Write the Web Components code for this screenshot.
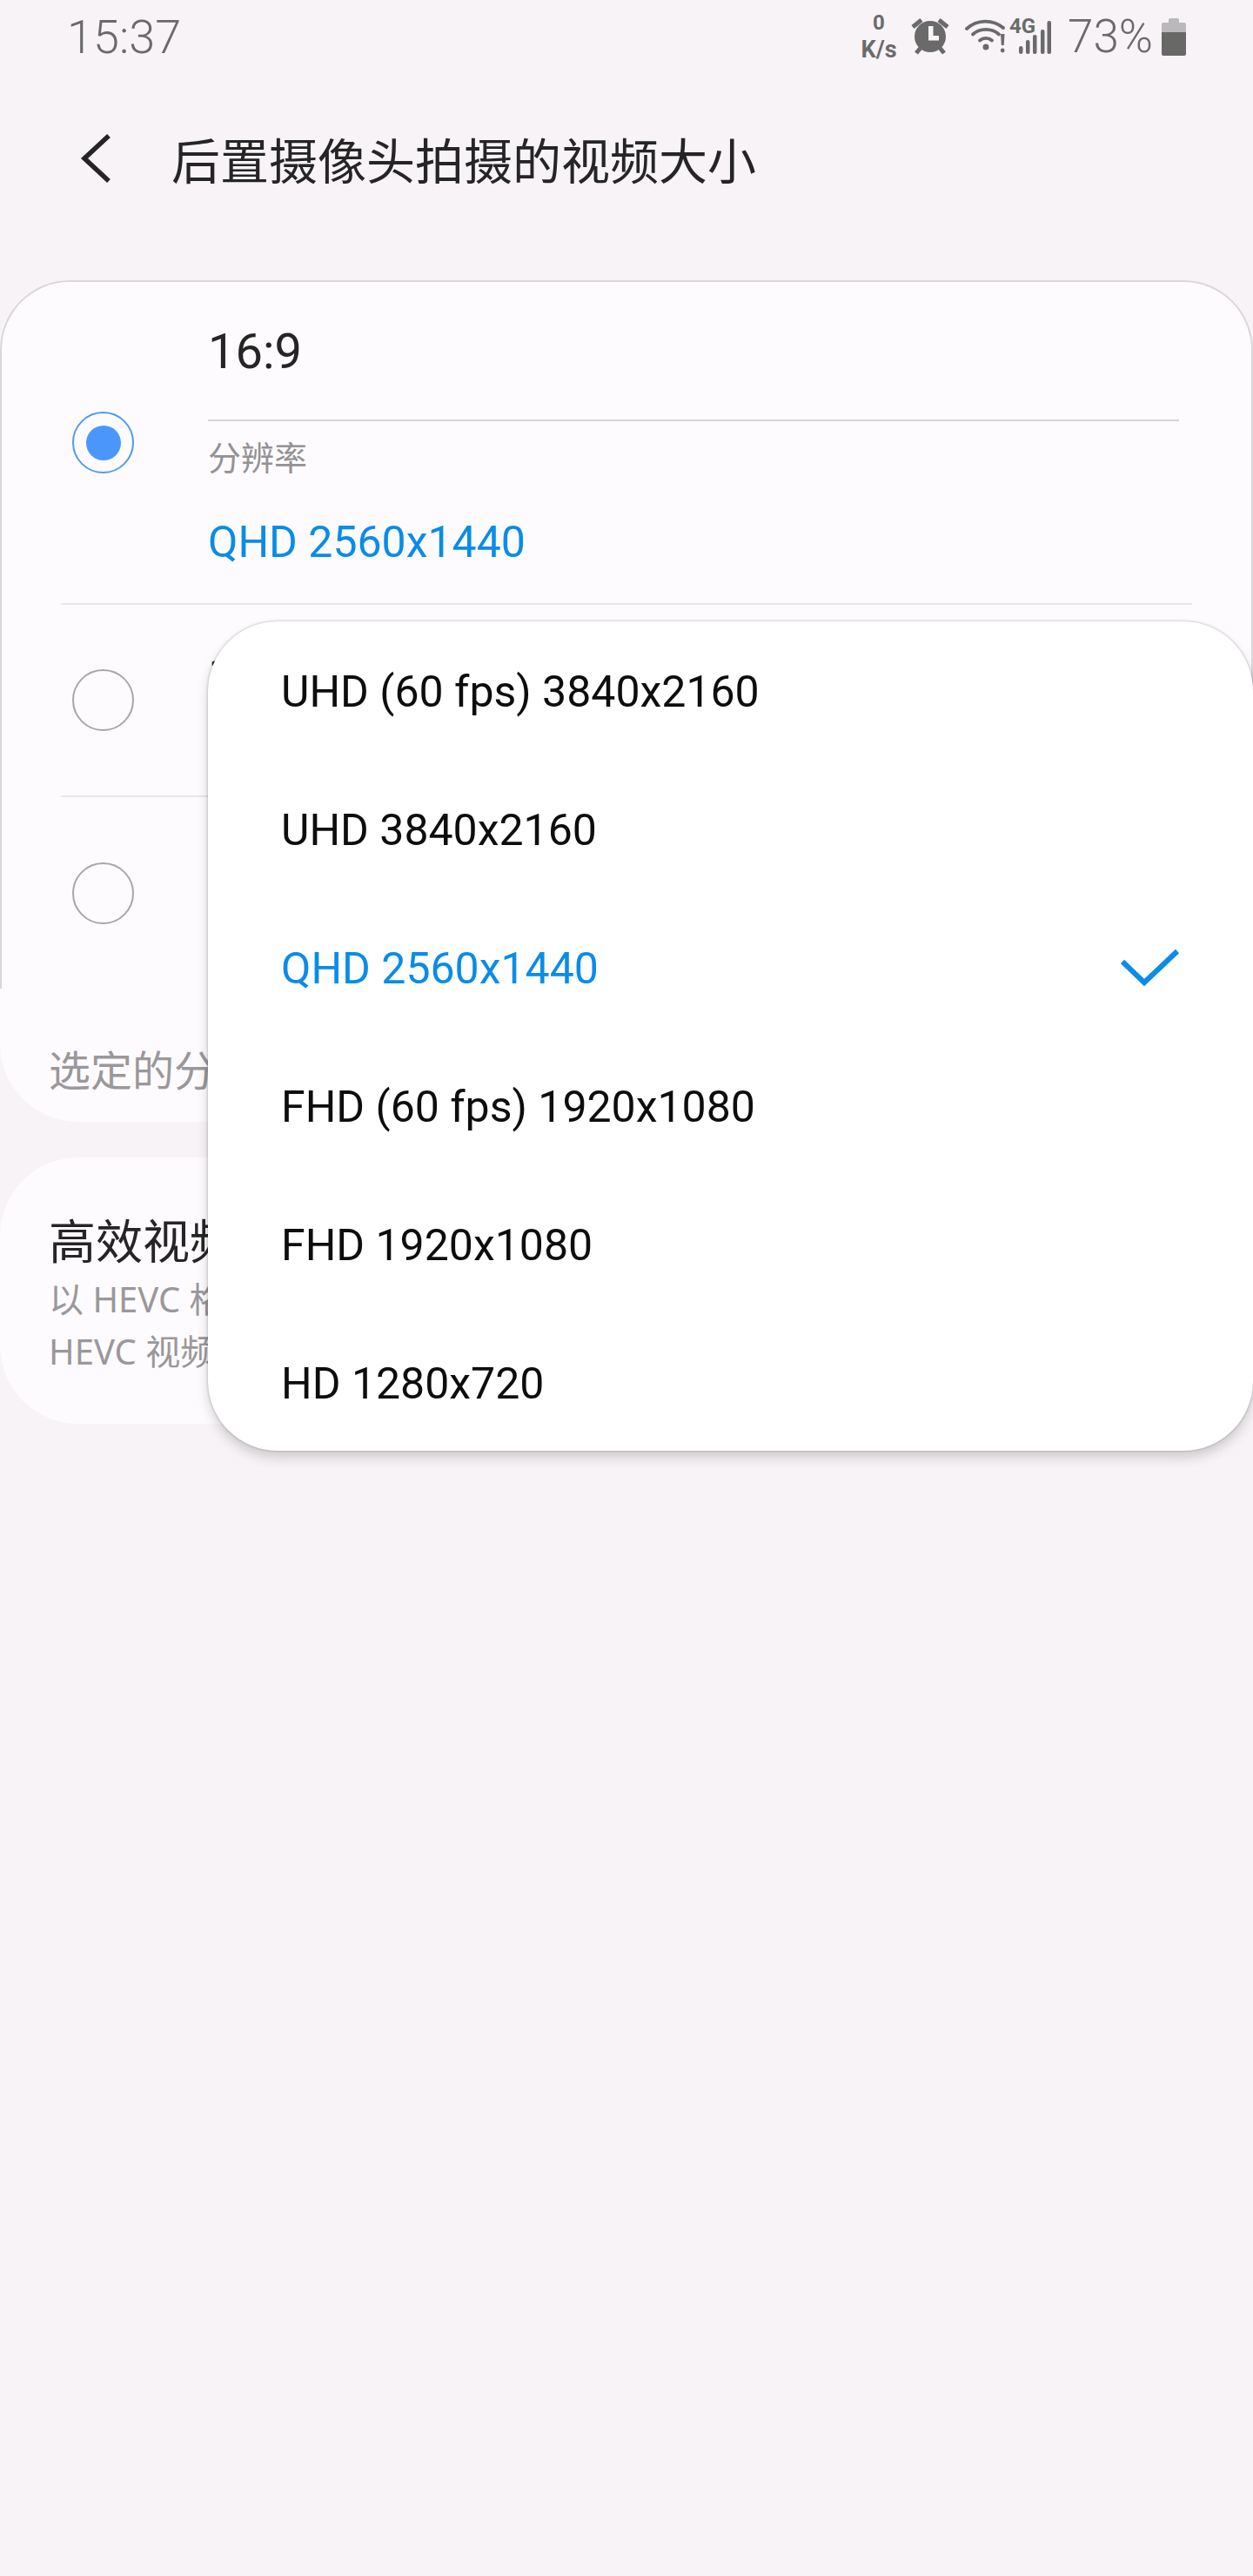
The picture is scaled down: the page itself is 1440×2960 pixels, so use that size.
<!DOCTYPE html>
<html lang="zh">
<head>
<meta charset="utf-8">
<title>后置摄像头拍摄的视频大小</title>
<style>
    html, body { margin: 0; background: #f7f3f7; }
    body { font-family: Roboto, "Noto Sans CJK SC", sans-serif; }
    #page { position: relative; width: 1440px; height: 2960px; overflow: hidden; }
</style>
</head>
<body>
<div id="page">
    <status-bar></status-bar>
    <title-bar>后置摄像头拍摄的视频大小</title-bar>

    <ratio-card>
        <ratio-row selected label="16:9" caption="分辨率" value="QHD 2560x1440"></ratio-row>
        <ratio-row raised label="1:1"></ratio-row>
        <ratio-row raised label="4:3"></ratio-row>
        <span slot="footer">选定的分辨率</span>
    </ratio-card>

    <switch-card heading="高效视频">
        <div>以 HEVC 格式</div>
        <div>HEVC 视频</div>
    </switch-card>

    <option-menu>
        <option-item>UHD (60 fps) 3840x2160</option-item>
        <option-item>UHD 3840x2160</option-item>
        <option-item selected>QHD 2560x1440</option-item>
        <option-item>FHD (60 fps) 1920x1080</option-item>
        <option-item>FHD 1920x1080</option-item>
        <option-item>HD 1280x720</option-item>
    </option-menu>
</div>

<script>
class StatusBar extends HTMLElement {
    constructor() {
        super();
        const shadow = this.attachShadow({ mode: 'open' });
        shadow.innerHTML = `
            <style>
                :host {
                    display: flex;
                    align-items: center;
                    justify-content: space-between;
                    height: 84px;
                    padding: 0 77px;
                    color: #6b6a6b;
                    font-family: Roboto, sans-serif;
                }
                .time { font-size: 54px; font-weight: 300; }
                .icons { display: flex; align-items: center; }
                .speed {
                    display: flex;
                    flex-direction: column;
                    align-items: center;
                    width: 46px;
                    font-weight: 700;
                }
                .speed .num { font-size: 24px; line-height: 29px; }
                .speed .unit { font-size: 27px; line-height: 32px; white-space: nowrap; }
                svg { display: block; }
                .alarm { margin-left: 14px; }
                .wifi { margin-left: 18px; }
                .net { position: relative; width: 48px; height: 44px; margin-left: 3px; }
                .net span {
                    position: absolute;
                    left: 0;
                    top: 0;
                    font-size: 24px;
                    font-weight: 700;
                    line-height: 21px;
                }
                .net svg { position: absolute; left: 10px; top: 2px; }
                .pct { width: 108px; margin-left: 19px; font-size: 53px; font-weight: 300; line-height: 60px; }
            </style>
            <div class="time">15:37</div>
            <div class="icons">
                <div class="speed"><span class="num">0</span><span class="unit">K/s</span></div>
                <svg class="alarm" width="44" height="44" viewBox="0 0 44 44">
                    <g stroke="#6b6a6b" stroke-width="5">
                        <path d="M2 11 12 3M42 11 32 3M6 41l5-6M38 41l-5-6"/>
                    </g>
                    <circle cx="22" cy="22" r="18" fill="#6b6a6b"/>
                    <path d="M20 10h5.500v11H32v5.500H20z" fill="#f7f3f7"/>
                </svg>
                <svg class="wifi" width="48" height="40" viewBox="0 0 48 40">
                    <g fill="none" stroke="#6b6a6b" stroke-width="3.800" stroke-linecap="round">
                        <path d="M2 11C14 0 32 0 44 10"/>
                        <path d="M9 17.500C17 10 31 10 39 17.500"/>
                        <path d="M17 24.500C21 21 27 21 31 24.500"/>
                    </g>
                    <circle cx="24" cy="32" r="3.500" fill="#6b6a6b"/>
                    <path d="M41 17h4.500l-.8 13h-2.900z" fill="#6b6a6b"/>
                    <circle cx="43.200" cy="36" r="2.400" fill="#6b6a6b"/>
                </svg>
                <div class="net">
                    <svg width="38" height="40" viewBox="0 0 38 40">
                        <g fill="#6b6a6b">
                            <rect x="1" y="31" width="4.500" height="9" rx="2.200"/>
                            <rect x="9" y="24" width="4.500" height="16" rx="2"/>
                            <rect x="17" y="18" width="4.500" height="22" rx="2"/>
                            <rect x="26" y="12" width="4.500" height="28" rx="2"/>
                            <rect x="33.500" y="2" width="4.500" height="38" rx="2"/>
                        </g>
                    </svg>
                    <span>4G</span>
                </div>
                <div class="pct">73%</div>
                <svg width="28" height="44" viewBox="0 0 28 44">
                    <path d="M8 3a2 2 0 0 1 2-2h8a2 2 0 0 1 2 2v3h6a2 2 0 0 1 2 2v9H0V8a2 2 0 0 1 2-2h6z" fill="#bab8ba"/>
                    <path d="M0 17h28v25a2 2 0 0 1-2 2H2a2 2 0 0 1-2-2z" fill="#686866"/>
                </svg>
            </div>
        `;
    }
}

class TitleBar extends HTMLElement {
    constructor() {
        super();
        const shadow = this.attachShadow({ mode: 'open' });
        shadow.innerHTML = `
            <style>
                :host {
                    display: flex;
                    align-items: center;
                    box-sizing: border-box;
                    height: 198px;
                    padding: 0 0 3px 90px;
                    color: #252525;
                    font-family: "Noto Sans CJK SC", sans-serif;
                    font-size: 56px;
                }
                svg { display: block; margin-right: 69px; }
            </style>
            <svg width="38" height="58" viewBox="0 0 38 58">
                <path d="M35 3 7 29l28 26" fill="none" stroke="#252525" stroke-width="5.500"/>
            </svg>
            <slot></slot>
        `;
    }
}

class RatioCard extends HTMLElement {
    constructor() {
        super();
        const shadow = this.attachShadow({ mode: 'open' });
        shadow.innerHTML = `
            <style>
                :host {
                    display: block;
                    margin-top: 40px;
                    background: #fefbfe;
                    border-radius: 80px 80px 90px 90px;
                }
                .list {
                    box-sizing: border-box;
                    height: 814px;
                    border: 2px solid #dad7da;
                    border-bottom: none;
                    border-radius: 80px 80px 0 0;
                    display: flex;
                    flex-direction: column;
                }
                .footer {
                    box-sizing: border-box;
                    height: 153px;
                    padding: 61px 56px 0;
                    color: #9a989a;
                    font-family: "Noto Sans CJK SC", sans-serif;
                    font-size: 48px;
                    line-height: 60px;
                }
            </style>
            <div class="list"><slot></slot></div>
            <div class="footer"><slot name="footer"></slot></div>
        `;
    }
}

class RatioRow extends HTMLElement {
    constructor() {
        super();
        const shadow = this.attachShadow({ mode: 'open' });
        const selected = this.hasAttribute('selected');
        const label = this.getAttribute('label');
        const caption = this.getAttribute('caption');
        const value = this.getAttribute('value');
        shadow.innerHTML = `
            <style>
                :host {
                    display: flex;
                    align-items: center;
                    flex: none;
                    height: 221px;
                    margin: 0 68px;
                    border-bottom: 2px solid #e9e5e9;
                    box-sizing: border-box;
                    font-family: Roboto, "Noto Sans CJK SC", sans-serif;
                }
                :host(:last-of-type) { border-bottom: none; height: 220px; }
                :host([selected]) { height: 371px; }
                .radio {
                    flex: none;
                    box-sizing: border-box;
                    width: 71px;
                    height: 71px;
                    margin-left: 13px;
                    border: 2.500px solid #a9a5a9;
                    border-radius: 50%;
                    display: flex;
                    align-items: center;
                    justify-content: center;
                }
                .radio.on { border-color: #4e9bf0; }
                .radio.on::after {
                    content: "";
                    width: 40px;
                    height: 40px;
                    border-radius: 50%;
                    background: #4a97fb;
                }
                .text { flex: 1; margin: 0 15px 0 85px; }
                .text.on-row { align-self: flex-start; }
                :host([raised]) .text { padding-bottom: 58px; }
                .label { font-size: 56px; color: #252525; line-height: 60px; }
                .on-row .label { padding: 50px 0 48px; border-bottom: 2px solid #d8d4d8; }
                .caption {
                    margin-top: 19px;
                    font-size: 38px;
                    line-height: 48px;
                    color: #949294;
                }
                .value {
                    margin-top: 40px;
                    font-size: 50px;
                    line-height: 64px;
                    color: #0a8ce8;
                }
            </style>
            <div class="radio ${selected ? 'on' : ''}"></div>
            <div class="text ${selected ? 'on-row' : ''}">
                <div class="label">${label}</div>
                ${caption ? `<div class="caption">${caption}</div>` : ''}
                ${value ? `<div class="value">${value}</div>` : ''}
            </div>
        `;
    }
}

class SwitchCard extends HTMLElement {
    constructor() {
        super();
        const shadow = this.attachShadow({ mode: 'open' });
        shadow.innerHTML = `
            <style>
                :host {
                    display: block;
                    box-sizing: border-box;
                    height: 306px;
                    margin-top: 41px;
                    padding: 66px 56px 0;
                    background: #fefbfe;
                    border-radius: 90px;
                    font-family: "Noto Sans", "Noto Sans CJK SC", sans-serif;
                }
                .heading { font-size: 54px; line-height: 60px; color: #252525; }
                .sub {
                    margin-top: 7px;
                    font-size: 40px;
                    line-height: 60px;
                    color: #9a989a;
                }
            </style>
            <div class="heading">${this.getAttribute('heading')}</div>
            <div class="sub"><slot></slot></div>
        `;
    }
}

class OptionMenu extends HTMLElement {
    constructor() {
        super();
        const shadow = this.attachShadow({ mode: 'open' });
        shadow.innerHTML = `
            <style>
                :host {
                    position: absolute;
                    left: 239px;
                    top: 714px;
                    width: 1201px;
                    height: 953px;
                    box-sizing: border-box;
                    padding-top: 1px;
                    background: #fff;
                    border-radius: 80px;
                    box-shadow: 0 0 3px rgba(0,0,0,.3), 0 8px 14px rgba(0,0,0,.16);
                    display: flex;
                    flex-direction: column;
                }
            </style>
            <slot></slot>
        `;
    }
}

class OptionItem extends HTMLElement {
    constructor() {
        super();
        const shadow = this.attachShadow({ mode: 'open' });
        shadow.innerHTML = `
            <style>
                :host {
                    display: flex;
                    flex: none;
                    align-items: center;
                    justify-content: space-between;
                    height: 159px;
                    padding: 0 84px;
                    color: #0d0d0d;
                    font-family: Roboto, sans-serif;
                    font-size: 50px;
                }
                :host([selected]) { color: #0a8ce8; }
                svg { display: none; }
                :host([selected]) svg { display: block; }
            </style>
            <slot></slot>
            <svg width="68" height="46" viewBox="0 0 68 46">
                <path d="M2 15 27 39 65 3" fill="none" stroke="#0a8ce8" stroke-width="6"/>
            </svg>
        `;
    }
}

customElements.define('status-bar', StatusBar);
customElements.define('title-bar', TitleBar);
customElements.define('ratio-card', RatioCard);
customElements.define('ratio-row', RatioRow);
customElements.define('switch-card', SwitchCard);
customElements.define('option-menu', OptionMenu);
customElements.define('option-item', OptionItem);
</script>
</body>
</html>
